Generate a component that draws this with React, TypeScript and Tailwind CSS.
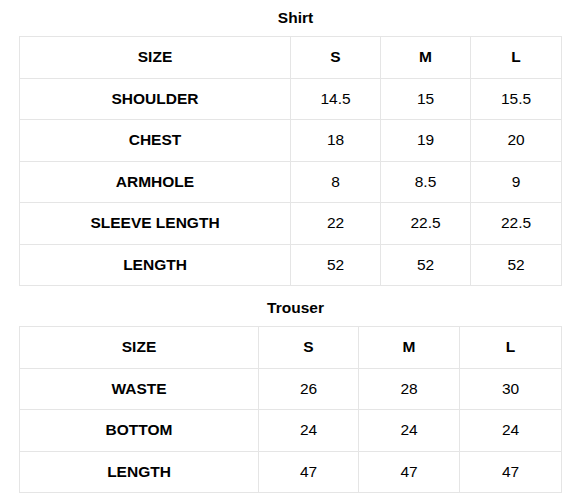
const shirt = {
  title: "Shirt",
  cols: ["w-[271px]", "w-[90px]", "w-[90px]", "w-[91px]"],
  titleClass: "h-[36px]",
  rows: [
    ["SHOULDER", "14.5", "15", "15.5"],
    ["CHEST", "18", "19", "20"],
    ["ARMHOLE", "8", "8.5", "9"],
    ["SLEEVE LENGTH", "22", "22.5", "22.5"],
    ["LENGTH", "52", "52", "52"],
  ],
};

const trouser = {
  title: "Trouser",
  cols: ["w-[239px]", "w-[100px]", "w-[101px]", "w-[102px]"],
  titleClass: "h-[40px] pt-[3px]",
  rows: [
    ["WASTE", "26", "28", "30"],
    ["BOTTOM", "24", "24", "24"],
    ["LENGTH", "47", "47", "47"],
  ],
};

type Chart = typeof shirt;

function SizeTable({ chart }: { chart: Chart }) {
  return (
    <div>
      <div
        className={`${chart.titleClass} flex items-center justify-center text-[15.5px] font-bold text-black`}
      >
        {chart.title}
      </div>
      <table className="w-[542px] table-fixed border-collapse text-[15.5px] leading-[16.5px] text-black">
        <colgroup>
          {chart.cols.map((c, i) => (
            <col key={i} className={c} />
          ))}
        </colgroup>
        <thead>
          <tr>
            {["SIZE", "S", "M", "L"].map((h) => (
              <th
                key={h}
                className="border border-[#e5e5e5] py-3 text-center font-bold"
              >
                {h}
              </th>
            ))}
          </tr>
        </thead>
        <tbody>
          {chart.rows.map((row) => (
            <tr key={row[0]}>
              {row.map((cell, i) => (
                <td
                  key={i}
                  className={`border border-[#e5e5e5] py-3 text-center ${i === 0 ? "font-bold" : "font-normal"}`}
                >
                  {cell}
                </td>
              ))}
            </tr>
          ))}
        </tbody>
      </table>
    </div>
  );
}

export default function App() {
  return (
    <div
      className="min-h-[498px] w-[572px] bg-white pl-[19px]"
      style={{ fontFamily: '"Liberation Sans", Arial, sans-serif' }}
    >
      <SizeTable chart={shirt} />
      <SizeTable chart={trouser} />
    </div>
  );
}
